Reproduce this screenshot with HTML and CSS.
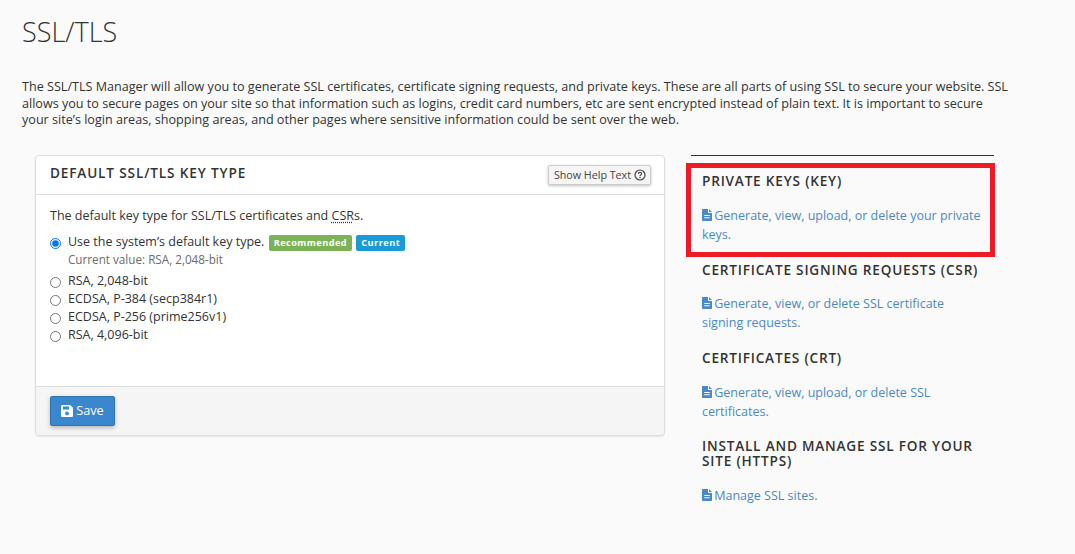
FILE: index.html
```html
<!DOCTYPE html>
<html lang="en">
<head>
<meta charset="utf-8">
<title>SSL/TLS</title>
<link rel="stylesheet" href="styles.css">
</head>
<body>
<div class="page">
  <h1 class="title">SSL/TLS</h1>
  <p class="intro">The SSL/TLS Manager will allow you to generate SSL certificates, certificate signing requests, and private keys. These are all parts of using SSL to secure your website. SSL allows you to secure pages on your site so that information such as logins, credit card numbers, etc are sent encrypted instead of plain text. It is important to secure your site’s login areas, shopping areas, and other pages where sensitive information could be sent over the web.</p>
  <div class="columns">
    <section class="panel">
      <header class="panel-head">
        <h2 class="panel-title">DEFAULT SSL/TLS KEY TYPE</h2>
        <button class="help-btn" type="button">Show Help Text
          <svg class="help-icon" viewBox="0 0 12 12" width="12" height="12"><circle cx="6" cy="6" r="5" fill="none" stroke="#444" stroke-width="1.2"/><path d="M4.4 4.8c0-2 3.2-2 3.2-.1 0 1.200-1.600 1.200-1.600 2.500" fill="none" stroke="#444" stroke-width="1.200"/><rect x="5.400" y="8" width="1.200" height="1.200" fill="#444"/></svg>
        </button>
      </header>
      <div class="panel-body">
        <p class="lead">The default key type for SSL/TLS certificates and <abbr class="abbr">CSR</abbr>s.</p>
        <label class="opt opt-first"><input type="radio" name="k" checked><span>Use the system’s default key type. <span class="badge green">Recommended</span> <span class="badge blue">Current</span></span></label>
        <div class="current">Current value: RSA, 2,048-bit</div>
        <label class="opt"><input type="radio" name="k"><span>RSA, 2,048-bit</span></label>
        <label class="opt"><input type="radio" name="k"><span>ECDSA, P-384 (secp384r1)</span></label>
        <label class="opt"><input type="radio" name="k"><span>ECDSA, P-256 (prime256v1)</span></label>
        <label class="opt"><input type="radio" name="k"><span>RSA, 4,096-bit</span></label>
      </div>
      <footer class="panel-foot">
        <button class="save" type="button">
          <svg viewBox="0 0 12 12" width="12" height="12"><path fill="#fff" fill-rule="evenodd" d="M1.200 0H9.200L12 2.800V10.800A1.200 1.200 0 0 1 10.800 12H1.200A1.200 1.200 0 0 1 0 10.800V1.200A1.200 1.200 0 0 1 1.200 0ZM2 1.500V4.500H8V1.500ZM6 6.500A1.900 1.900 0 1 0 6 10.300 1.900 1.900 0 0 0 6 6.500Z"/></svg>
          <span class="save-label">Save</span>
        </button>
      </footer>
    </section>
    <aside class="side">
      <div class="side-item">
        <h3 class="side-title">PRIVATE KEYS (KEY)</h3>
        <a class="side-link" href="#"><svg class="doc" viewBox="0 0 10 12" width="10" height="12"><path fill="#4a89c8" fill-rule="evenodd" d="M0 .8A.8.8 0 0 1 .8 0H6V3.200A.8.8 0 0 0 6.800 4H10V11.200A.8.8 0 0 1 9.200 12H.8A.8.8 0 0 1 0 11.200ZM2.200 6V7H7.800V6ZM2.200 8.200V9.200H7.800V8.200ZM7 0 10 3H7Z"/></svg> Generate, view, upload, or delete your private keys.</a>
      </div>
      <div class="side-item">
        <h3 class="side-title">CERTIFICATE SIGNING REQUESTS (CSR)</h3>
        <a class="side-link" href="#"><svg class="doc" viewBox="0 0 10 12" width="10" height="12"><path fill="#4a89c8" fill-rule="evenodd" d="M0 .8A.8.8 0 0 1 .8 0H6V3.200A.8.8 0 0 0 6.800 4H10V11.200A.8.8 0 0 1 9.200 12H.8A.8.8 0 0 1 0 11.200ZM2.200 6V7H7.800V6ZM2.200 8.200V9.200H7.800V8.200ZM7 0 10 3H7Z"/></svg> Generate, view, or delete SSL certificate signing requests.</a>
      </div>
      <div class="side-item">
        <h3 class="side-title">CERTIFICATES (CRT)</h3>
        <a class="side-link" href="#"><svg class="doc" viewBox="0 0 10 12" width="10" height="12"><path fill="#4a89c8" fill-rule="evenodd" d="M0 .8A.8.8 0 0 1 .8 0H6V3.200A.8.8 0 0 0 6.800 4H10V11.200A.8.8 0 0 1 9.200 12H.8A.8.8 0 0 1 0 11.200ZM2.200 6V7H7.800V6ZM2.200 8.200V9.200H7.800V8.200ZM7 0 10 3H7Z"/></svg> Generate, view, upload, or delete SSL certificates.</a>
      </div>
      <div class="side-item">
        <h3 class="side-title">INSTALL AND MANAGE SSL FOR YOUR SITE (HTTPS)</h3>
        <a class="side-link" href="#"><svg class="doc" viewBox="0 0 10 12" width="10" height="12"><path fill="#4a89c8" fill-rule="evenodd" d="M0 .8A.8.8 0 0 1 .8 0H6V3.200A.8.8 0 0 0 6.800 4H10V11.200A.8.8 0 0 1 9.200 12H.8A.8.8 0 0 1 0 11.200ZM2.200 6V7H7.800V6ZM2.200 8.200V9.200H7.800V8.200ZM7 0 10 3H7Z"/></svg> Manage SSL sites.</a>
      </div>
      <div class="highlight"></div>
    </aside>
  </div>
</div>
</body>
</html>
```
FILE: styles.css
```css
* { box-sizing: border-box; }
html, body { margin: 0; height: 100%; }
body {
  background: #fafafa;
  color: #333;
  font-family: "Open Sans", sans-serif;
  font-size: 12.5px;
  line-height: 18px;
  overflow: hidden;
}
.page { padding: 0 60px 0 22px; }
.title {
  margin: 0;
  padding-top: 14px;
  height: 79px;
  font-size: 27px;
  line-height: 36px;
  font-weight: 300;
  color: #333;
}
.intro { margin: 0; height: 76px; width: 988px; font-size: 12.6px; line-height: 16.6px; }
.columns { display: flex; align-items: flex-start; padding-left: 13px; }
.panel {
  width: 630px;
  height: 281px;
  flex: none;
  display: flex;
  flex-direction: column;
  background: #fff;
  border: 1px solid #ddd;
  border-radius: 4px;
  box-shadow: 0 1px 2px rgba(0,0,0,.08);
}
.panel-head {
  height: 39px;
  flex: none;
  display: flex;
  justify-content: space-between;
  align-items: flex-start;
  padding: 8px 13px 0 14px;
  border-bottom: 1px solid #ddd;
}
.panel-title {
  margin: 0;
  font-size: 13.6px;
  line-height: 18px;
  font-weight: 600;
  letter-spacing: .85px;
  color: #333;
}
.help-btn {
  height: 20px;
  margin-top: 1px;
  padding: 0 4px 0 5px;
  display: flex;
  align-items: center;
  gap: 3px;
  font-family: inherit;
  font-size: 10.7px;
  color: #444;
  background: #f5f5f5;
  border: 1px solid #ccc;
  border-radius: 2px;
  box-shadow: 0 1px 3px rgba(0,0,0,.25);
}
.panel-body { flex: 1; padding: 12px 14px 0; }
.lead { margin: 0 0 8px; }
.abbr { text-decoration: underline dotted #333; text-underline-offset: 2px; }
.opt { display: flex; align-items: center; height: 18px; }
.opt input { width: 11px; height: 11px; margin: 2px 7px 0 0; flex: none; }
.badge {
  display: inline-block;
  height: 16px;
  padding: 0 5px;
  margin-left: 1px;
  font-size: 9.2px;
  line-height: 16px;
  font-weight: 700;
  letter-spacing: .45px;
  color: #fff;
  border-radius: 2px;
}
.green { background: #7cb356; }
.blue { background: #1a9ad6; }
.current { padding-left: 18px; color: #6b6b6b; font-size: 11.7px; margin: -1px 0 4px; }
.panel-foot {
  height: 49px;
  flex: none;
  padding: 9px 14px 0;
  background: #f5f5f5;
  border-top: 1px solid #ddd;
  border-radius: 0 0 4px 4px;
}
.save {
  width: 65px;
  height: 30px;
  display: flex;
  align-items: center;
  justify-content: center;
  gap: 3px;
  font-family: inherit;
  font-size: 12.7px;
  color: #fff;
  background: #3a87cd;
  border: 1px solid #2e74b5;
  border-radius: 2px;
  box-shadow: 0 2px 4px rgba(0,0,0,.25);
}
.save-label { margin-top: -2px; }
.side {
  position: relative;
  width: 303px;
  margin-left: 26px;
  border-top: 1px solid #333;
  padding: 0 11px;
}
.side-item { margin-bottom: 17.7px; }
.side-item:first-child { padding-top: 17.3px; }
.side-title {
  margin: 0 0 17.7px;
  font-size: 13.6px;
  line-height: 15px;
  font-weight: 600;
  letter-spacing: .8px;
  color: #333;
}
.side-link { display: block; color: #4a89c8; text-decoration: none; line-height: 19px; }
.doc { vertical-align: -1px; margin-right: -1px; }
.highlight {
  position: absolute;
  left: -5px;
  top: 7px;
  width: 309px;
  height: 94px;
  border: 5px solid #ed1c24;
}
```
